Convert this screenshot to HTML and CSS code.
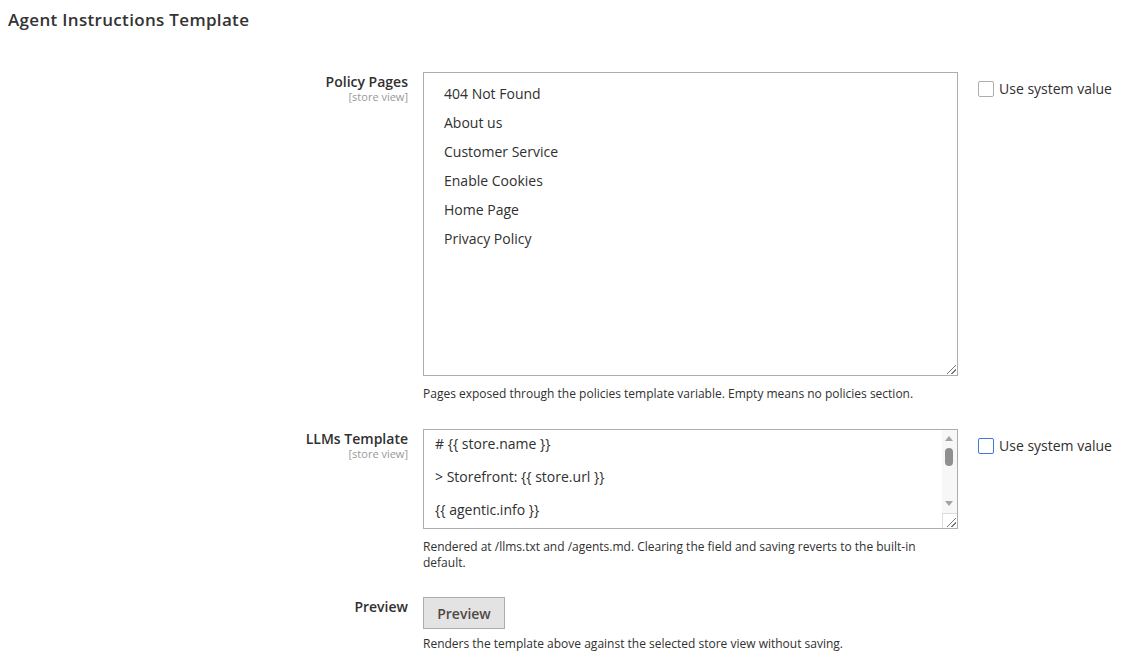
FILE: index.html
```html
<!DOCTYPE html>
<html lang="en">
<head>
<meta charset="utf-8">
<title>Agent Instructions Template</title>
<link rel="stylesheet" href="styles.css">
</head>
<body>
<div class="page">
  <h2 class="section-title">Agent Instructions Template</h2>

  <div class="config">
    <div class="row">
      <div class="label">
        <span class="label-text">Policy Pages</span>
        <span class="scope">[store view]</span>
      </div>
      <div class="value">
        <div class="multiselect">
          <div class="option">404 Not Found</div>
          <div class="option">About us</div>
          <div class="option">Customer Service</div>
          <div class="option">Enable Cookies</div>
          <div class="option">Home Page</div>
          <div class="option">Privacy Policy</div>
          <span class="resize-grip"></span>
        </div>
        <p class="note">Pages exposed through the policies template variable. Empty means no policies section.</p>
      </div>
      <div class="inherit">
        <label class="checkbox-label"><span class="checkbox"></span>Use system value</label>
      </div>
    </div>

    <div class="row">
      <div class="label">
        <span class="label-text">LLMs Template</span>
        <span class="scope">[store view]</span>
      </div>
      <div class="value">
        <div class="textarea">
          <div class="textarea-content"># {{ store.name }}

&gt; Storefront: {{ store.url }}

{{ agentic.info }}</div>
          <div class="scrollbar">
            <span class="arrow-up"></span>
            <span class="thumb"></span>
            <span class="arrow-down"></span>
            <span class="corner"><span class="resize-grip small"></span></span>
          </div>
        </div>
        <p class="note">Rendered at /llms.txt and /agents.md. Clearing the field and saving reverts to the built-in default.</p>
      </div>
      <div class="inherit">
        <label class="checkbox-label"><span class="checkbox focused"></span>Use system value</label>
      </div>
    </div>

    <div class="row row-action">
      <div class="label label-button">
        <span class="label-text">Preview</span>
      </div>
      <div class="value">
        <button class="button" type="button">Preview</button>
        <p class="note note-tight">Renders the template above against the selected store view without saving.</p>
      </div>
      <div class="inherit"></div>
    </div>
  </div>
</div>
</body>
</html>
```

FILE: styles.css
```css
* { box-sizing: border-box; }

html, body {
  margin: 0;
  padding: 0;
  background: #ffffff;
}

body {
  font-family: "Open Sans", "Noto Sans", "Liberation Sans", sans-serif;
  color: #303030;
  font-size: 14px;
}

.page {
  padding: 8px 0 0 8px;
}

.section-title {
  margin: 0;
  font-size: 17px;
  font-weight: 600;
  color: #333333;
  line-height: 24px;
  letter-spacing: 0.32px;
}

.config {
  margin-top: 40px;
  display: flex;
  flex-direction: column;
  gap: 27px;
}

.row {
  display: grid;
  grid-template-columns: 400px 535px 1fr;
  column-gap: 15px;
}

.row-action {
  margin-top: -1px;
}

.label {
  display: flex;
  flex-direction: column;
  align-items: flex-end;
  text-align: right;
  padding-top: 0;
}

.label-text {
  font-weight: 600;
  font-size: 14px;
  line-height: 19px;
  color: #303030;
}

.scope {
  font-size: 11px;
  line-height: 11px;
  color: #999999;
}

.multiselect {
  position: relative;
  height: 304px;
  border: 1px solid #adadad;
  background: #ffffff;
  padding: 6px 0 0 20px;
}

.option {
  line-height: 29px;
  font-size: 14px;
  color: #303030;
}

.resize-grip {
  position: absolute;
  right: 1px;
  bottom: 1px;
  width: 9px;
  height: 9px;
  background:
    linear-gradient(135deg, transparent 0 46%, #777 46% 54%, transparent 54% 70%, #777 70% 78%, transparent 78%);
}

.note {
  margin: 10px 0 0 0;
  font-size: 12px;
  line-height: 16px;
  color: #303030;
}

.note-tight {
  margin-top: 7px;
}

.textarea {
  position: relative;
  height: 100px;
  border: 1px solid #adadad;
  background: #ffffff;
  display: flex;
  overflow: hidden;
}

.textarea-content {
  flex: 1;
  padding: 6px 0 0 11px;
  white-space: pre-wrap;
  font-size: 14px;
  line-height: 16.5px;
  color: #303030;
}

.scrollbar {
  position: relative;
  width: 15px;
  background: #f7f7f7;
  flex-shrink: 0;
}

.arrow-up,
.arrow-down {
  position: absolute;
  left: 3px;
  width: 0;
  height: 0;
  border-left: 4.5px solid transparent;
  border-right: 4.5px solid transparent;
}

.arrow-up {
  top: 6px;
  border-bottom: 5px solid #a3a3a3;
}

.arrow-down {
  top: 71px;
  border-top: 5px solid #a3a3a3;
}

.thumb {
  position: absolute;
  left: 3px;
  top: 18px;
  width: 8px;
  height: 18px;
  border-radius: 4px;
  background: #8f8f8f;
}

.corner {
  position: absolute;
  left: 0;
  bottom: 0;
  width: 15px;
  height: 15px;
  background: #ffffff;
  border-left: 1px solid #dcdcdc;
  border-top: 1px solid #dcdcdc;
}

.inherit {
  padding-top: 8px;
  padding-left: 5px;
}

.checkbox-label {
  display: inline-flex;
  align-items: center;
  gap: 5px;
  font-size: 14px;
  line-height: 18px;
  color: #303030;
  cursor: pointer;
}

.checkbox {
  display: inline-block;
  width: 16px;
  height: 16px;
  border: 1px solid #adadad;
  border-radius: 2px;
  background: #ffffff;
}

.checkbox.focused {
  border-color: #3d7ad6;
}

.button {
  display: block;
  width: 82px;
  height: 32px;
  border: 1px solid #adadad;
  background: #e3e3e3;
  font-family: "Open Sans", "Noto Sans", "Liberation Sans", sans-serif;
  font-size: 14px;
  font-weight: 600;
  color: #514943;
  padding: 0;
  cursor: pointer;
}
```
